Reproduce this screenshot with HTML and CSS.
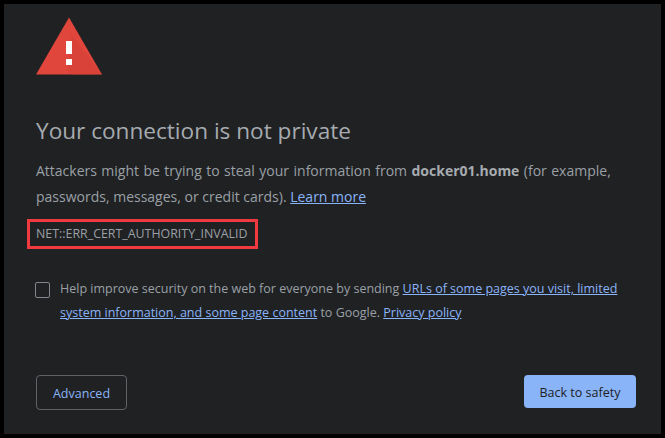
FILE: index.html
```html
<!DOCTYPE html>
<html lang="en">
<head>
<meta charset="utf-8">
<title>Privacy error</title>
<link rel="stylesheet" href="styles.css">
</head>
<body>
<main class="panel">
  <svg class="warn" width="66" height="58" viewBox="0 0 66 58" aria-hidden="true">
    <path d="M33 0.5 L66 57.5 H0 Z" fill="#e0463c"/>
    <path d="M36 18 L66 57.5 H36 L31 53 Z" fill="#d23f35" opacity="0.55"/>
    <rect x="30" y="24" width="6" height="13" fill="#fff"/>
    <rect x="30" y="42" width="6" height="6" fill="#fff"/>
  </svg>
  <h1 class="title">Your connection is not private</h1>
  <p class="desc"><span class="desc-first">Attackers might be trying to steal your information from <strong>docker01.home</strong> (for example,</span> passwords, messages, or credit cards). <a href="#">Learn more</a></p>
  <div class="code">NET::ERR_CERT_AUTHORITY_INVALID</div>
  <div class="optin">
    <span class="check"></span>
    <p class="optin-text">Help improve security on the web for everyone by sending <a href="#">URLs of some pages you visit, limited system information, and some page content</a> to Google. <a href="#">Privacy policy</a></p>
  </div>
  <div class="actions">
    <button class="btn btn-adv">Advanced</button>
    <button class="btn btn-back">Back to safety</button>
  </div>
</main>
</body>
</html>
```
FILE: styles.css
```css
* { box-sizing: border-box; }
html, body { margin: 0; height: 100%; }
body {
  background: #000;
  padding: 4px;
  font-family: "Open Sans", "Noto Sans", sans-serif;
}
.panel {
  width: 657px;
  height: 430px;
  background: #202123;
  padding: 13px 25px 0 32px;
  display: flex;
  flex-direction: column;
  color: #9aa0a6;
}
.warn { display: block; flex: none; }
.title {
  margin: 41px 0 0;
  font-size: 22.6px;
  line-height: 30px;
  font-weight: 400;
  color: #a6abb0;
}
.desc {
  margin: 12px 0 0;
  font-size: 14px;
  line-height: 26px;
}
.desc-first { word-spacing: 0.8px; }
.desc strong { font-weight: 700; color: #a6abb0; }
a { color: #8ab4f8; text-decoration: underline; }
.code {
  margin: 9px 0 0 -9px;
  width: 231px;
  height: 30px;
  border: 3px solid #f03a3f;
  padding-left: 6px;
  font-size: 12.4px;
  line-height: 24px;
  color: #9aa0a6;
  white-space: nowrap;
}
.optin {
  margin-top: 28px;
  margin-left: -1px;
  display: flex;
  gap: 10px;
}
.check {
  flex: none;
  width: 15px;
  height: 16px;
  margin-top: 5px;
  border: 1px solid #80868b;
  border-radius: 2px;
}
.optin-text {
  margin: 0;
  font-size: 12.5px;
  line-height: 24px;
}
.actions {
  margin-top: 50px;
  display: flex;
  justify-content: space-between;
  align-items: flex-start;
}
.btn {
  font-family: inherit;
  font-size: 12.5px;
  border-radius: 4px;
  padding: 1px 0 0;
}
.btn-adv {
  width: 91px;
  height: 35px;
  background: transparent;
  border: 1px solid #5f6368;
  color: #8ab4f8;
}
.btn-back {
  width: 112px;
  height: 33px;
  background: #8ab4f8;
  border: 0;
  color: #202124;
}
```
